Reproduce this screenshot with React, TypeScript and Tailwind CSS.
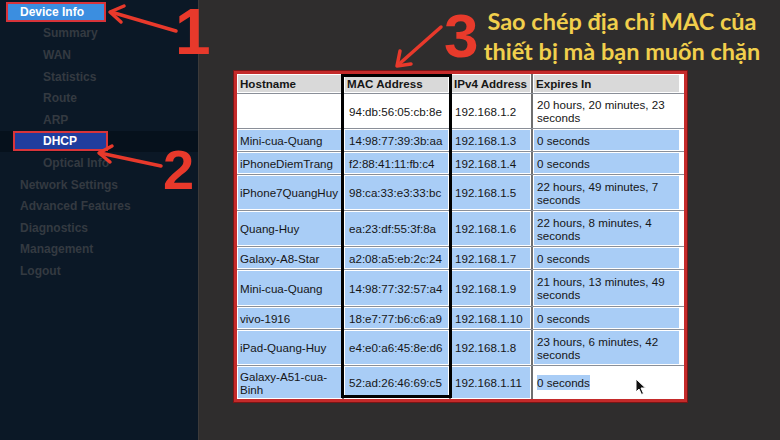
import React from "react";

type Row = {
  host: React.ReactNode;
  mac: string;
  ip: string;
  exp: React.ReactNode;
  h: string;
  kind: "white" | "blue" | "last";
};

const rows: Row[] = [
  { host: "", mac: "94:db:56:05:cb:8e", ip: "192.168.1.2", exp: <>20 hours, 20 minutes, 23<br />seconds</>, h: "h-[35px]", kind: "white" },
  { host: "Mini-cua-Quang", mac: "14:98:77:39:3b:aa", ip: "192.168.1.3", exp: "0 seconds", h: "h-[23px]", kind: "blue" },
  { host: "iPhoneDiemTrang", mac: "f2:88:41:11:fb:c4", ip: "192.168.1.4", exp: "0 seconds", h: "h-[23px]", kind: "blue" },
  { host: "iPhone7QuangHuy", mac: "98:ca:33:e3:33:bc", ip: "192.168.1.5", exp: <>22 hours, 49 minutes, 7<br />seconds</>, h: "h-[36px]", kind: "blue" },
  { host: "Quang-Huy", mac: "ea:23:df:55:3f:8a", ip: "192.168.1.6", exp: <>22 hours, 8 minutes, 4<br />seconds</>, h: "h-[36px]", kind: "blue" },
  { host: "Galaxy-A8-Star", mac: "a2:08:a5:eb:2c:24", ip: "192.168.1.7", exp: "0 seconds", h: "h-[23px]", kind: "blue" },
  { host: "Mini-cua-Quang", mac: "14:98:77:32:57:a4", ip: "192.168.1.9", exp: <>21 hours, 13 minutes, 49<br />seconds</>, h: "h-[37px]", kind: "blue" },
  { host: "vivo-1916", mac: "18:e7:77:b6:c6:a9", ip: "192.168.1.10", exp: "0 seconds", h: "h-[23px]", kind: "blue" },
  { host: "iPad-Quang-Huy", mac: "e4:e0:a6:45:8e:d6", ip: "192.168.1.8", exp: <>23 hours, 6 minutes, 42<br />seconds</>, h: "h-[36px]", kind: "blue" },
  { host: <>Galaxy-A51-cua-<br />Binh</>, mac: "52:ad:26:46:69:c5", ip: "192.168.1.11", exp: "0 seconds", h: "h-[33px]", kind: "last" },
];

function Cell({ children, bg, sep, extra = "" }: { children: React.ReactNode; bg: string; sep: boolean; extra?: string }) {
  return (
    <div className={`flex min-w-0 p-px ${sep ? "border-l-2 border-[#6f6f6f]" : ""}`}>
      <div className={`flex min-w-0 flex-1 items-center whitespace-nowrap pl-[2px] leading-[13px] ${bg} ${extra}`}>{children}</div>
    </div>
  );
}

const sideSub = ["Summary", "WAN", "Statistics", "Route", "ARP"];
const sideTop = ["Network Settings", "Advanced Features", "Diagnostics", "Management", "Logout"];

export default function App() {
  return (
    <div
      className="relative flex h-[440px] w-[780px] overflow-hidden"
      style={{ fontFamily: '"Liberation Sans", Arial, sans-serif' }}
    >
      {/* Sidebar */}
      <aside className="flex w-[198px] shrink-0 flex-col bg-[#0b1826] pt-px text-[12px] font-bold text-[#343a41]">
        <div className="flex h-[21.6px] items-center pl-[6px]">
          <div className="flex h-[20px] w-[100px] items-center border-2 border-[#d8343a] bg-[#3b8ee0] pl-[12px] text-white">
            Device Info
          </div>
        </div>
        {sideSub.map((s) => (
          <div key={s} className="flex h-[21.6px] items-center pl-[43px]">
            {s}
          </div>
        ))}
        <div className="flex h-[21.6px] items-center bg-[#06111c] pl-[13px]">
          <div className="flex h-[20px] w-[95px] items-center border-2 border-[#d8343a] bg-[#1f3d9e] pl-[28px] text-white">
            DHCP
          </div>
        </div>
        <div className="flex h-[21.6px] items-center pl-[43px]">Optical Info</div>
        {sideTop.map((s) => (
          <div key={s} className="flex h-[21.6px] items-center pl-[20px]">
            {s}
          </div>
        ))}
      </aside>

      {/* Main */}
      <main className="relative flex flex-1 flex-col border-l border-[#3c3a3a] bg-[#2f2d2d]">
        <div className="flex h-[71px] items-center pl-[245px]">
          <span className="w-[33px] text-[62px] font-black leading-none text-[#e83a2b]">3</span>
          <div
            className="w-[290px] text-center text-[23.5px] font-bold leading-[30px] text-[#f1cf4c]"
            style={{ fontFamily: 'Lato, "Noto Sans", sans-serif' }}
          >
            <div>Sao chép địa chỉ MAC của</div>
            <div>thiết bị mà bạn muốn chặn</div>
          </div>
        </div>

        <div className="relative ml-[35px] w-[453px] border-[3px] border-[#c42a2a] bg-white text-[11.6px] text-[#161616] shadow-[0_0_0_1px_#7a1515]">
          {/* header */}
          <div className="grid h-[20px] grid-cols-[105px_107px_82px_153px] border-b border-[#8a8f98] font-bold">
            <Cell bg="bg-[#d9d9d9]" sep={false}>Hostname</Cell>
            <Cell bg="bg-[#d9d9d9]" sep>MAC Address</Cell>
            <Cell bg="bg-[#d9d9d9]" sep>IPv4 Address</Cell>
            <Cell bg="bg-[#d9d9d9]" sep extra="mr-[4px]">Expires In</Cell>
          </div>
          {rows.map((r, i) => {
            const bg = r.kind === "white" ? "bg-white" : "bg-[#a9cdf6]";
            return (
              <div
                key={i}
                className={`grid grid-cols-[105px_107px_82px_153px] ${r.h} ${r.kind === "last" ? "" : "border-b border-[#8a8f98]"}`}
              >
                <Cell bg={bg} sep={false}>{r.host}</Cell>
                <Cell bg={bg} sep extra="pl-[4px]">{r.mac}</Cell>
                <Cell bg={bg} sep extra="pl-[3px]">{r.ip}</Cell>
                {r.kind === "last" ? (
                  <Cell bg="bg-white" sep extra="pl-[3px]">
                    <span className="bg-[#a9cdf6] leading-[15px]">0 seconds</span>
                  </Cell>
                ) : (
                  <Cell bg={bg} sep extra="mr-[4px] pl-[3px]">{r.exp}</Cell>
                )}
              </div>
            );
          })}
          {/* black box annotation around MAC column */}
          <div className="pointer-events-none absolute left-[104px] top-[0px] h-[324px] w-[111px] border-[3px] border-black" />
          {/* mouse cursor */}
          <svg className="absolute left-[398px] top-[304px]" width="12" height="18" viewBox="0 0 12 18">
            <path d="M1 1 L1 14 L4 11 L6.5 16.5 L8.5 15.5 L6 10 L10.5 10 Z" fill="#111" stroke="#fff" strokeWidth="1" strokeLinejoin="round" />
          </svg>
        </div>
      </main>

      {/* Annotation overlay: arrows */}
      <svg className="pointer-events-none absolute left-0 top-0" width="780" height="440" viewBox="0 0 780 440">
        <g stroke="#e8392b" strokeWidth="3.5" strokeLinecap="round" fill="none" strokeLinejoin="round">
          <line x1="176" y1="31" x2="111" y2="12" />
          <polyline points="124,6 110,12 121,22" />
          <line x1="161" y1="166" x2="100" y2="153" />
          <polyline points="112,146 99,153 110,162" />
          <line x1="441" y1="27" x2="398" y2="65" />
          <polyline points="400,51 397,66 411,64" />
        </g>
      </svg>
      <div className="pointer-events-none absolute left-[175px] top-0 text-[64px] font-bold leading-none text-[#e8392b]">
        1
      </div>
      <div className="pointer-events-none absolute left-[163px] top-[142px] text-[56px] font-bold leading-none text-[#e8392b]">
        2
      </div>
    </div>
  );
}
